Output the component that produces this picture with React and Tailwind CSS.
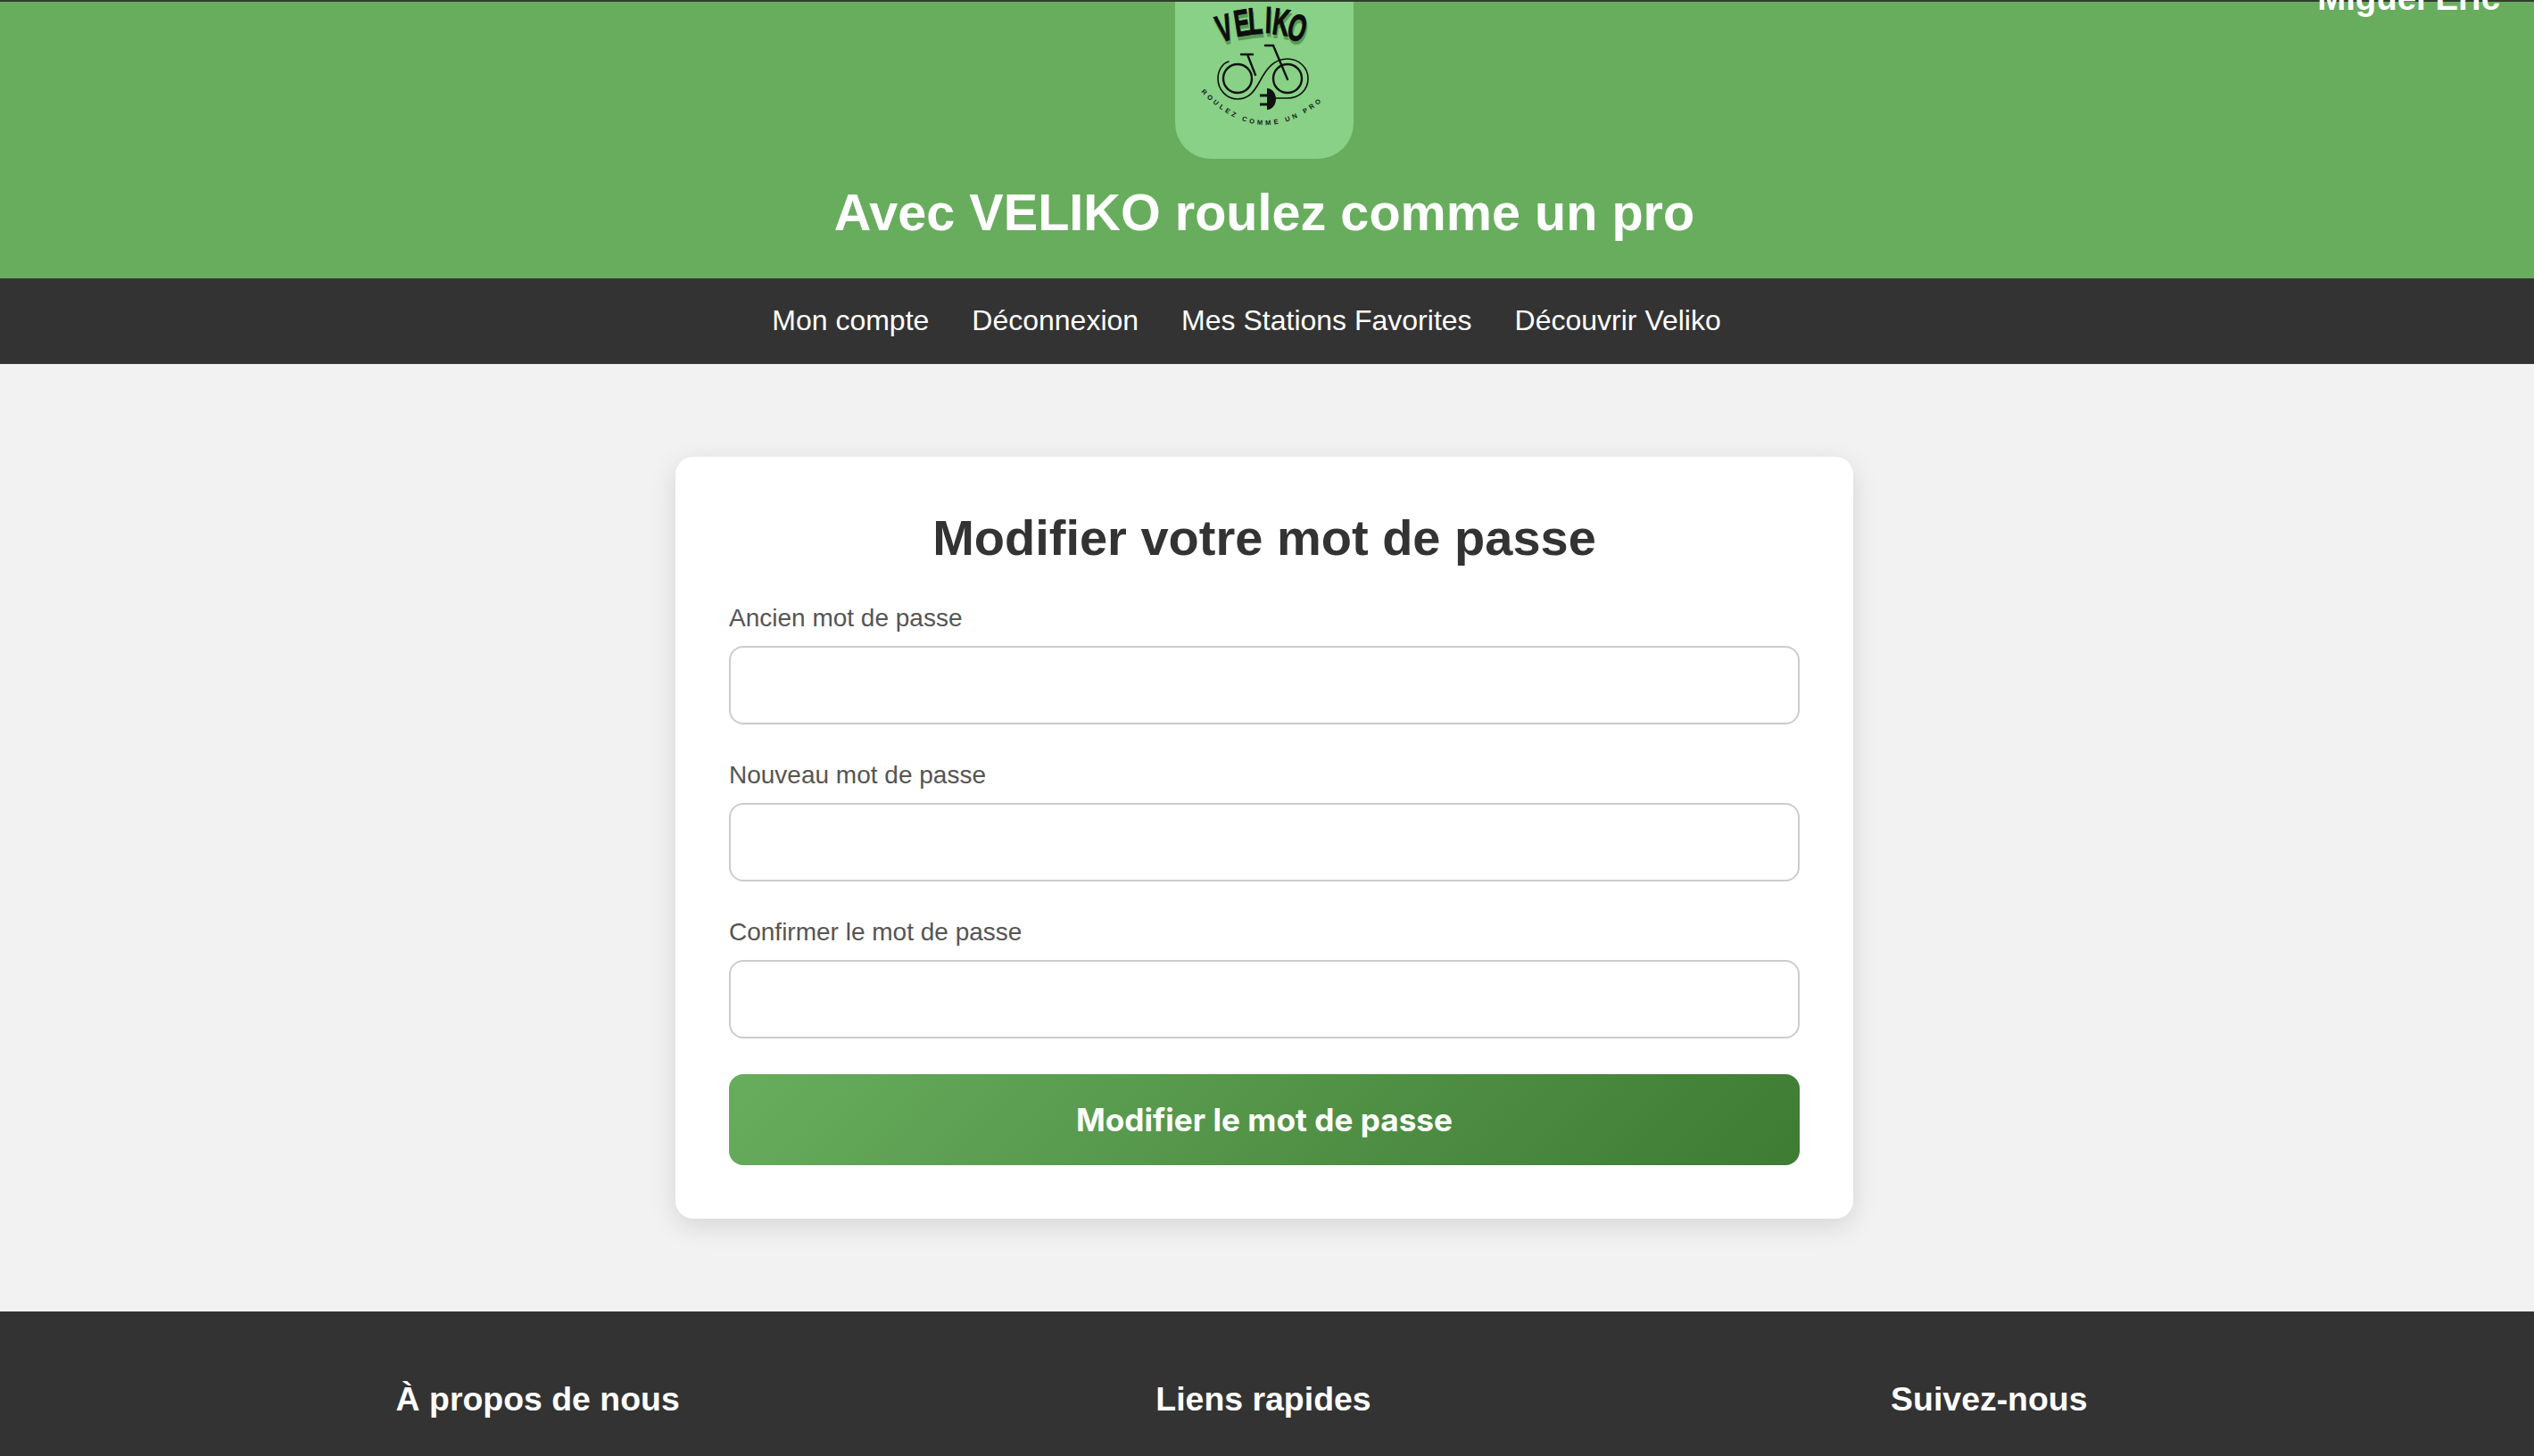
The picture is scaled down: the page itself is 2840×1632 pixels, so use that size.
import React from 'react';

const logoFont = "'Liberation Sans', sans-serif";

// arched wordmark: each letter sits on its own rotation
const logoLetters = [
  { ch: 'V', x: 59, y: 43, r: -16 },
  { ch: 'E', x: 77, y: 38, r: -9 },
  { ch: 'L', x: 91, y: 36, r: -4 },
  { ch: 'I', x: 104, y: 35, r: 2 },
  { ch: 'K', x: 117, y: 37, r: 8 },
  { ch: 'O', x: 133, y: 43, r: 16 },
];

const Logo = () => (
  <svg viewBox="0 0 200 178" className="block w-[200px] h-[178px]">
    {logoLetters.map((l) => (
      <text key={`s${l.ch}`} transform={`translate(${l.x + 1} ${l.y + 4}) rotate(${l.r}) scale(0.62 1)`} textAnchor="middle" fontFamily={logoFont} fontWeight="700" fontSize="42" stroke="#5c9a58" strokeWidth="1" fill="#5c9a58">{l.ch}</text>
    ))}
    {logoLetters.map((l) => (
      <text key={l.ch} transform={`translate(${l.x} ${l.y}) rotate(${l.r}) scale(0.62 1)`} textAnchor="middle" fontFamily={logoFont} fontWeight="700" fontSize="42" stroke="#0d0d0d" strokeWidth="1" fill="#0d0d0d">{l.ch}</text>
    ))}
    <g fill="none" stroke="#111" strokeLinecap="round">
      <path d="M60 67C53 69 48 77 48 86C48 99 58 109 70 109C83 109 89 100 95 89C102 76 110 64 126 64C139 64 149 74 149 86C149 99 139 108 126 108H113" strokeWidth="1.6" />
      <circle cx="70" cy="86" r="16" strokeWidth="2.4" />
      <circle cx="126" cy="86" r="16" strokeWidth="2.4" />
      <path d="M74 59H87M81 59L90 82M101 49H110L126 87" strokeWidth="2.4" />
    </g>
    <path d="M103 97C109 97 113 103 113 109C113 115 109 121 103 121Z" fill="#111" />
    <path d="M95 103.5H103V106.5H95ZM95 113.5H103V116.5H95Z" fill="#111" />
    <defs>
      <path id="logo-arc" d="M29 101Q98 172 170 107" />
    </defs>
    <text fontFamily={logoFont} fontSize="7.5" fontWeight="700" letterSpacing="3.3" fill="#1a1a1a">
      <textPath href="#logo-arc">ROULEZ COMME UN PRO</textPath>
    </text>
  </svg>
);

const Field = ({ label }) => (
  <div className="mb-[40px]">
    <label className="block mb-[14px] text-[28px] leading-[34px] text-[#555]">{label}</label>
    <input type="password" className="block w-full h-[88px] rounded-[16px] border-2 border-[#ccc] bg-white" />
  </div>
);

const FooterColumn = ({ title }) => (
  <div className="text-center">
    <h3 className="text-[37.44px] leading-[44px] font-bold text-white">{title}</h3>
  </div>
);

export default function App() {
  return (
    <div className="h-[1632px] overflow-hidden bg-[#f2f2f2] font-['Liberation_Sans',sans-serif]">
      <header className="relative h-[312px] border-t-2 border-[#2f3e2c] bg-[#68ad5e] pr-[6px] text-center">
        <div className="mx-auto w-[200px] h-[176px] overflow-hidden rounded-b-[40px] bg-[#88d186]">
          <Logo />
        </div>
        <h1 className="mt-[26px] text-[57.6px] leading-[68px] font-bold text-white">Avec VELIKO roulez comme un pro</h1>
        <span className="absolute right-[38px] top-[-26px] text-[38.4px] leading-[44px] font-bold text-white">Miguel Eric</span>
      </header>

      <nav className="flex h-[96px] items-center justify-center gap-[48px] bg-[#333] pb-[2px] pr-[46px] text-[32px] text-white">
        <a>Mon compte</a>
        <a>Déconnexion</a>
        <a>Mes Stations Favorites</a>
        <a>Découvrir Veliko</a>
      </nav>

      <main className="h-[1062px] pr-[6px] pt-[104px]">
        <section className="mx-auto w-[1320px] h-[854px] rounded-[20px] bg-white px-[60px] pt-[58px] shadow-[0_8px_30px_rgba(0,0,0,0.12)]">
          <h2 className="mb-[40px] text-center text-[56px] leading-[66px] font-bold text-[#333]">Modifier votre mot de passe</h2>
          <Field label="Ancien mot de passe" />
          <Field label="Nouveau mot de passe" />
          <Field label="Confirmer le mot de passe" />
          <button className="block w-full h-[102px] rounded-[16px] bg-linear-135 from-[#68ad5e] to-[#3e7b33] font-['Inter',sans-serif] text-[35.2px] font-bold text-white">
            Modifier le mot de passe
          </button>
        </section>
      </main>

      <footer className="h-[162px] bg-[#333] pr-[8px] pt-[76px]">
        <div className="mx-auto grid w-[2400px] grid-cols-3 gap-[40px]">
          <FooterColumn title="À propos de nous" />
          <FooterColumn title="Liens rapides" />
          <FooterColumn title="Suivez-nous" />
        </div>
      </footer>
    </div>
  );
}
